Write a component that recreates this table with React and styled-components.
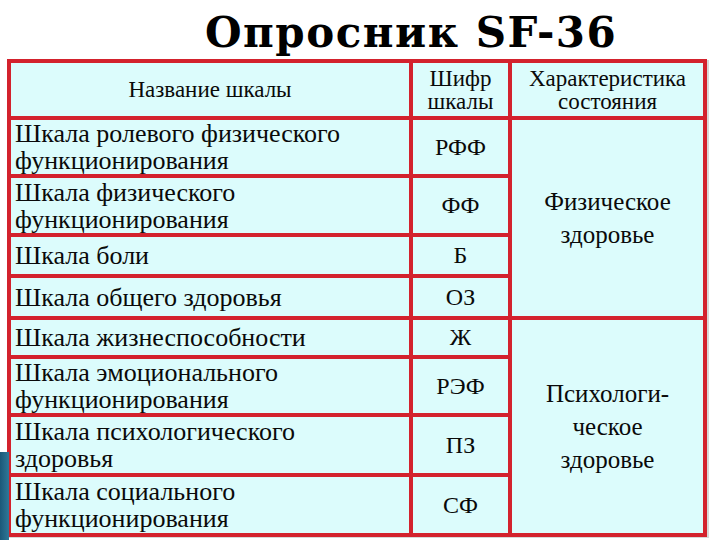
import React from "react";
import styled, { createGlobalStyle } from "styled-components";

const rows = [
  { name: ["Шкала ролевого физического", "функционирования"], code: "РФФ" },
  { name: ["Шкала физического", "функционирования"], code: "ФФ" },
  { name: ["Шкала боли"], code: "Б" },
  { name: ["Шкала общего здоровья"], code: "ОЗ" },
  { name: ["Шкала жизнеспособности"], code: "Ж" },
  { name: ["Шкала эмоционального", "функционирования"], code: "РЭФ" },
  { name: ["Шкала психологического", "здоровья"], code: "ПЗ" },
  { name: ["Шкала социального", "функционирования"], code: "СФ" },
];

const groups = [
  { lines: ["Физическое", "здоровье"], start: 2, span: 4 },
  { lines: ["Психологи-", "ческое", "здоровье"], start: 6, span: 4 },
];

const Global = createGlobalStyle`
  body {
    margin: 0;
    background: #ffffff;
    font-family: 'Liberation Serif', serif;
  }
`;

const Slide = styled.div`
  position: relative;
  width: 720px;
  height: 540px;
  overflow: hidden;
  display: flex;
  flex-direction: column;
  font-family: 'Liberation Serif', serif;
  color: #0a0a0a;
`;

const Corner = styled.div`
  position: absolute;
  left: 0;
  bottom: 0;
  width: 9px;
  height: 88px;
  background: linear-gradient(90deg, #1b5878, #2f7898);
`;

const Title = styled.div`
  height: 59px;
  padding-left: 205px;
  box-sizing: border-box;
  font-family: 'DejaVu Serif', 'Liberation Serif', serif;
  font-weight: 700;
  font-size: 42px;
  line-height: 66px;
  letter-spacing: 1.5px;
  color: #000;
  white-space: nowrap;
`;

const Table = styled.div`
  margin-left: 7px;
  width: 700px;
  box-sizing: border-box;
  padding: 4px;
  display: grid;
  grid-template-columns: 398px 95px 191px;
  grid-template-rows: 53px 54px 55px 37px 38px 35px 54px 56px 56px;
  gap: 4px;
  background: #d3222d;
  box-shadow: 2px 1px 0 #d8d8d8;
`;

const Cell = styled.div`
  grid-column: ${(p) => p.$col};
  grid-row: ${(p) => (p.$span ? `${p.$row} / span ${p.$span}` : p.$row)};
  background: #dcfcfc;
  display: flex;
  flex-direction: column;
  justify-content: center;
  align-items: ${(p) => (p.$left ? "flex-start" : "center")};
  text-align: ${(p) => (p.$left ? "left" : "center")};
  padding: ${(p) => (p.$left ? "0 4px" : "0")};
  white-space: nowrap;
  font-family: 'Liberation Serif', serif;
`;

const HeadCell = styled(Cell)`
  font-size: 23px;
  line-height: 23px;
`;

const NameCell = styled(Cell)`
  font-size: 26px;
  line-height: 27px;
`;

const CodeCell = styled(Cell)`
  font-size: 24px;
  line-height: 27px;
`;

const GroupCell = styled(Cell)`
  font-size: 25px;
  line-height: 33px;
`;

const Line = styled.span`
  display: block;
`;

export default function App() {
  return (
    <>
      <Global />
      <Slide>
        <Corner />
        <Title>Опросник SF-36</Title>
        <Table>
          <HeadCell $row={1} $col={1}>Название шкалы</HeadCell>
          <HeadCell $row={1} $col={2}>
            <Line>Шифр</Line>
            <Line>шкалы</Line>
          </HeadCell>
          <HeadCell $row={1} $col={3}>
            <Line>Характеристика</Line>
            <Line>состояния</Line>
          </HeadCell>
          {rows.map((r, i) => (
            <React.Fragment key={r.code}>
              <NameCell $left $row={i + 2} $col={1}>
                {r.name.map((l) => (
                  <Line key={l}>{l}</Line>
                ))}
              </NameCell>
              <CodeCell $row={i + 2} $col={2}>
                {r.code}
              </CodeCell>
            </React.Fragment>
          ))}
          {groups.map((g) => (
            <GroupCell key={g.start} $row={g.start} $span={g.span} $col={3}>
              {g.lines.map((l) => (
                <Line key={l}>{l}</Line>
              ))}
            </GroupCell>
          ))}
        </Table>
      </Slide>
    </>
  );
}
